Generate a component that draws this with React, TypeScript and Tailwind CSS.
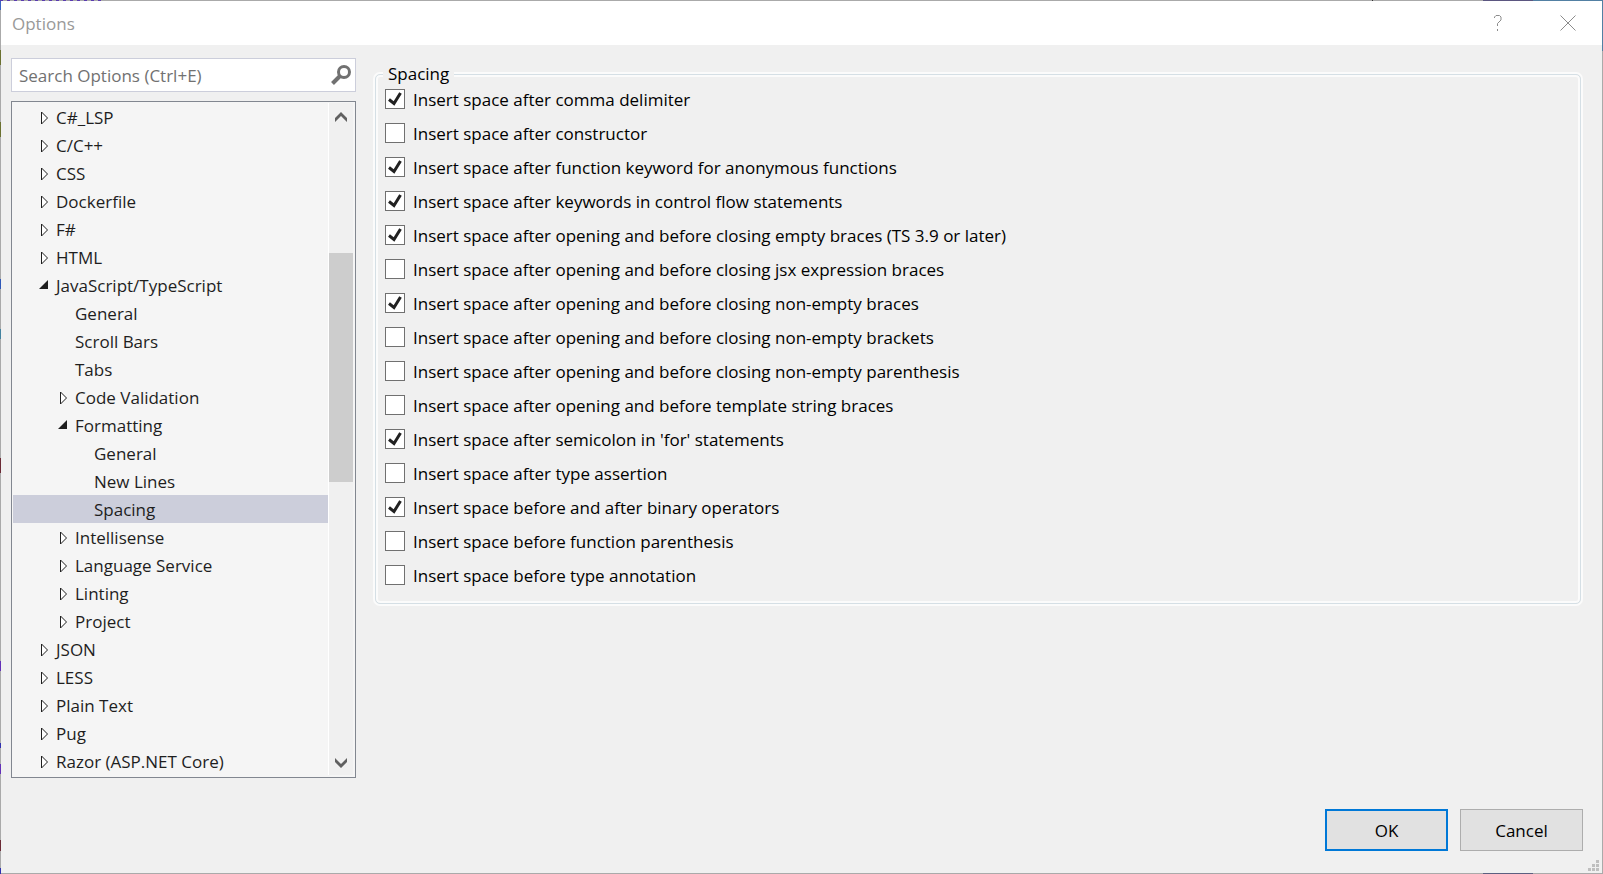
import { useState } from "react"

type Node = {
  label: string
  level: 0 | 1 | 2
  state?: "open" | "closed"
}

const nodes: Node[] = [
  { label: "C#_LSP", level: 0, state: "closed" },
  { label: "C/C++", level: 0, state: "closed" },
  { label: "CSS", level: 0, state: "closed" },
  { label: "Dockerfile", level: 0, state: "closed" },
  { label: "F#", level: 0, state: "closed" },
  { label: "HTML", level: 0, state: "closed" },
  { label: "JavaScript/TypeScript", level: 0, state: "open" },
  { label: "General", level: 1 },
  { label: "Scroll Bars", level: 1 },
  { label: "Tabs", level: 1 },
  { label: "Code Validation", level: 1, state: "closed" },
  { label: "Formatting", level: 1, state: "open" },
  { label: "General", level: 2 },
  { label: "New Lines", level: 2 },
  { label: "Spacing", level: 2 },
  { label: "Intellisense", level: 1, state: "closed" },
  { label: "Language Service", level: 1, state: "closed" },
  { label: "Linting", level: 1, state: "closed" },
  { label: "Project", level: 1, state: "closed" },
  { label: "JSON", level: 0, state: "closed" },
  { label: "LESS", level: 0, state: "closed" },
  { label: "Plain Text", level: 0, state: "closed" },
  { label: "Pug", level: 0, state: "closed" },
  { label: "Razor (ASP.NET Core)", level: 0, state: "closed" },
]

const options: [string, boolean][] = [
  ["Insert space after comma delimiter", true],
  ["Insert space after constructor", false],
  ["Insert space after function keyword for anonymous functions", true],
  ["Insert space after keywords in control flow statements", true],
  ["Insert space after opening and before closing empty braces (TS 3.9 or later)", true],
  ["Insert space after opening and before closing jsx expression braces", false],
  ["Insert space after opening and before closing non-empty braces", true],
  ["Insert space after opening and before closing non-empty brackets", false],
  ["Insert space after opening and before closing non-empty parenthesis", false],
  ["Insert space after opening and before template string braces", false],
  ["Insert space after semicolon in 'for' statements", true],
  ["Insert space after type assertion", false],
  ["Insert space before and after binary operators", true],
  ["Insert space before function parenthesis", false],
  ["Insert space before type annotation", false],
]

const indent = ["pl-6", "pl-[43px]", "pl-[62px]"]

const edgeTints = [
  "left-0 top-0 h-2.5 w-px bg-[#3a62c4]",
  "left-0 top-[50px] h-[15px] w-px bg-[#6b7130]",
  "left-0 top-[122px] h-[15px] w-px bg-[#6b7130]",
  "left-0 top-[279px] h-2.5 w-px bg-[#2f58b8]",
  "left-0 top-[329px] h-2.5 w-px bg-[#4483a0]",
  "left-0 top-[458px] h-[15px] w-px bg-[#6b2a35]",
  "left-0 top-[661px] h-2.5 w-px bg-[#6330b8]",
  "left-0 top-[743px] h-[5px] w-px bg-[#3030b0]",
  "left-0 top-[764px] h-2.5 w-px bg-[#6330b8]",
  "left-0 top-[840px] h-[11px] w-px bg-[#6b2a35]",
  "left-0 bottom-0 h-1.5 w-px bg-[#3030b0]",
  "right-[230px] top-0 h-px w-px bg-[#333]",
  "right-[70px] top-0 h-px w-[50px] bg-[#5b5680]",
  "right-0 top-0 h-px w-[70px] bg-[#5280a3]",
  "right-0 top-0 h-[51px] w-px bg-[#5280a3]",
  "right-[70px] bottom-0 h-px w-[50px] bg-[#5b5f80]",
]

function Expander({ state }: { state?: "open" | "closed" }) {
  return (
    <svg width="12" height="14" viewBox="0 0 12 14" className="shrink-0" aria-hidden="true">
      {state === "closed" && <path d="M4.5 1v12l6-6z" fill="#fff" stroke="#1e1e1e" />}
      {state === "open" && <path d="M11 1v9H2z" fill="#1e1e1e" />}
    </svg>
  )
}

function TitleBar() {
  return (
    <header className="flex h-11 items-center bg-white pl-[11px] pr-[26px] text-[#999]">
      <h1 className="flex-1 pt-0.5">Options</h1>
      <button type="button" aria-label="Help" className="mr-[58px]">
        <svg width="8" height="16" viewBox="0 0 8 16" fill="none" stroke="#8c8c8c">
          <path d="M.5 3V2L2 .5h3.500L7 2v3L3.500 8.500V11" />
          <path d="M3.500 14v2" />
        </svg>
      </button>
      <button type="button" aria-label="Close">
        <svg width="16" height="16" viewBox="0 0 16 16" fill="none" stroke="#8c8c8c">
          <path d="M.5.5l15 15M15.500.5l-15 15" />
        </svg>
      </button>
    </header>
  )
}

function SearchBox() {
  return (
    <div className="flex h-[34px] items-center border border-[#cccedb] bg-white pl-[7px] pr-1">
      <input
        type="text"
        aria-label="Search Options"
        placeholder="Search Options (Ctrl+E)"
        className="min-w-0 flex-1 bg-transparent pt-0.5 text-[#717171] outline-none placeholder:text-[#717171]"
      />
      <button type="button" aria-label="Search">
        <svg width="20" height="20" viewBox="0 0 20 20" fill="none" stroke="#717171">
          <circle cx="13" cy="7" r="5.500" strokeWidth="3" />
          <path d="M9 11L1.500 18.500" strokeWidth="4" />
        </svg>
      </button>
    </div>
  )
}

function OptionsTree() {
  const [selected, setSelected] = useState(14)

  return (
    <div className="flex border border-[#828790] bg-[#f5f5f5] px-px pb-0.5 pt-px">
      <ul role="tree" aria-label="Option pages" className="min-w-0 flex-1 text-[#1e1e1e]">
        {nodes.map((node, i) => (
          <li
            key={i}
            role="treeitem"
            aria-selected={i === selected}
            onClick={() => setSelected(i)}
            className={`flex h-7 cursor-default items-center gap-[7px] whitespace-nowrap pt-px ${indent[node.level]} ${
              i === selected ? "bg-[#cccedb]" : ""
            }`}
          >
            <Expander state={node.state} />
            {node.label}
          </li>
        ))}
      </ul>

      {/* Scroll bar */}
      <div className="mr-px flex w-[25px] flex-col border-l border-white bg-[#f0f0f0]">
        <button type="button" aria-label="Scroll up" className="flex h-7 items-center justify-center">
          <svg width="12" height="10" viewBox="0 0 12 10">
            <path d="M6 0l6 6v4L6 4 0 10V6z" fill="#606060" />
          </svg>
        </button>
        <div className="flex flex-1 flex-col">
          <div className="flex-[122]" />
          <div className="flex-[229] bg-[#cdcdcd]" />
          <div className="flex-[269]" />
        </div>
        <button type="button" aria-label="Scroll down" className="flex h-6 items-center justify-center">
          <svg width="12" height="10" viewBox="0 0 12 10">
            <path d="M6 10l6-6V0L6 6 0 0v4z" fill="#606060" />
          </svg>
        </button>
      </div>
    </div>
  )
}

function SpacingOptions() {
  return (
    <fieldset className="mt-1 min-w-0 flex-1 self-start rounded-[5px] border border-[#d5dfe5] pb-[11px] pl-[9px] pr-2 shadow-[0_0_0_2px_#fbfbfb,inset_0_0_0_2px_#fbfbfb]">
      <legend className="ml-[-2px] bg-[#f0f0f0] px-[5px] leading-6">Spacing</legend>
      <div className="-mt-1 flex flex-col">
        {options.map(([label, checked]) => (
          <label key={label} className="flex h-[34px] items-center gap-2">
            <span className="grid size-5 shrink-0">
              <input
                type="checkbox"
                defaultChecked={checked}
                className="peer col-start-1 row-start-1 size-5 appearance-none border border-[#707070] bg-white"
              />
              <svg
                viewBox="0 0 20 20"
                className="pointer-events-none col-start-1 row-start-1 hidden size-5 peer-checked:block"
              >
                <path d="M4 10.500l5 4L15.500 4" fill="none" stroke="#212121" strokeWidth="3" />
              </svg>
            </span>
            <span className="pt-px">{label}</span>
          </label>
        ))}
      </div>
    </fieldset>
  )
}

function SizeGrip() {
  return (
    <svg width="11" height="11" viewBox="0 0 11 11" fill="#bfbfbf" className="absolute bottom-0.5 right-[3px]" aria-hidden="true">
      <path d="M8 0h3v3H8zM4 4h3v3H4zM8 4h3v3H8zM0 8h3v3H0zM4 8h3v3H4zM8 8h3v3H8z" />
    </svg>
  )
}

export default function App() {
  return (
    <div className="relative">
      <main className="relative flex min-h-screen flex-col border border-[#aaa] bg-[#f0f0f0] font-['Open_Sans','Noto_Sans',sans-serif] text-[17px] text-black">
        <TitleBar />
        <div className="flex gap-[19px] pl-2.5 pr-[21px] pt-[13px]">
          <div className="flex w-[345px] shrink-0 flex-col gap-[9px]">
            <SearchBox />
            <OptionsTree />
          </div>
          <SpacingOptions />
        </div>
        <footer className="mt-auto flex justify-end gap-3 pb-[22px] pr-[19px]">
          <button type="button" className="h-[42px] w-[123px] border-2 border-[#0078d7] bg-[#e1e1e1] pt-px">
            OK
          </button>
          <button type="button" className="h-[42px] w-[123px] border border-[#adadad] bg-[#e1e1e1] pt-px">
            Cancel
          </button>
        </footer>
        <SizeGrip />
      </main>
      {edgeTints.map((tint) => (
        <span key={tint} className={`pointer-events-none absolute ${tint}`} />
      ))}
      <span className="pointer-events-none absolute left-0 top-0 h-px w-[105px] bg-[repeating-linear-gradient(90deg,#5a3cb0_0_3px,#aaa_3px_7px)]" />
    </div>
  )
}
